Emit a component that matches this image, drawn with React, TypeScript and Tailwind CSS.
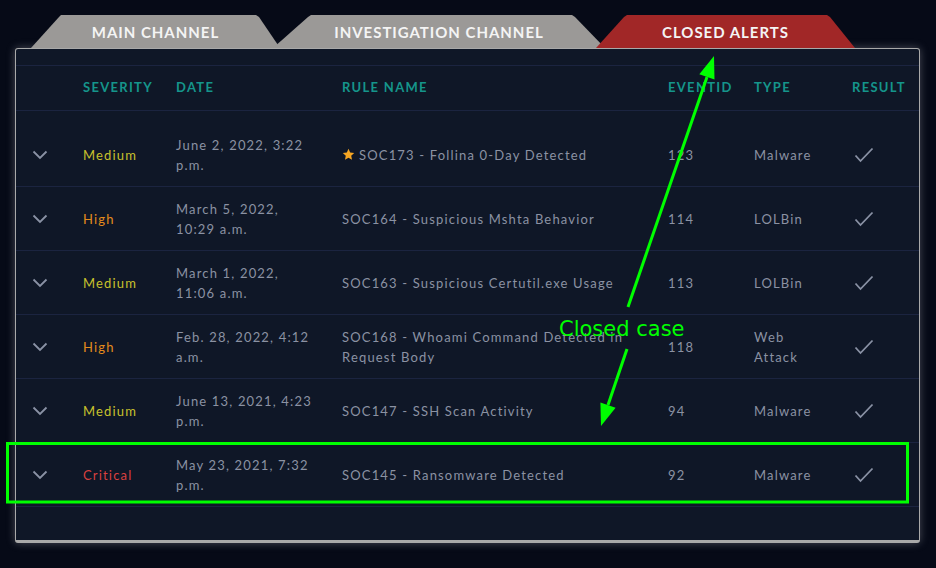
import React from 'react'

type Severity = 'Medium' | 'High' | 'Critical'

interface Alert {
  severity: Severity
  date: string[]
  rule: string[]
  starred?: boolean
  eventId: string
  type: string[]
}

const SEVERITY_COLOR: Record<Severity, string> = {
  Medium: 'text-[#c9c12c]',
  High: 'text-[#e38b1c]',
  Critical: 'text-[#d9403f]',
}

const ALERTS: Alert[] = [
  { severity: 'Medium', date: ['June 2, 2022, 3:22', 'p.m.'], rule: ['SOC173 - Follina 0-Day Detected'], starred: true, eventId: '123', type: ['Malware'] },
  { severity: 'High', date: ['March 5, 2022,', '10:29 a.m.'], rule: ['SOC164 - Suspicious Mshta Behavior'], eventId: '114', type: ['LOLBin'] },
  { severity: 'Medium', date: ['March 1, 2022,', '11:06 a.m.'], rule: ['SOC163 - Suspicious Certutil.exe Usage'], eventId: '113', type: ['LOLBin'] },
  { severity: 'High', date: ['Feb. 28, 2022, 4:12', 'a.m.'], rule: ['SOC168 - Whoami Command Detected in', 'Request Body'], eventId: '118', type: ['Web', 'Attack'] },
  { severity: 'Medium', date: ['June 13, 2021, 4:23', 'p.m.'], rule: ['SOC147 - SSH Scan Activity'], eventId: '94', type: ['Malware'] },
  { severity: 'Critical', date: ['May 23, 2021, 7:32', 'p.m.'], rule: ['SOC145 - Ransomware Detected'], eventId: '92', type: ['Malware'] },
]

const GRID = 'grid grid-cols-[67px_93px_166px_326px_86px_98px_1fr] items-center'

function Lines({ lines }: { lines: string[] }) {
  return (
    <div>
      {lines.map((l) => (
        <div key={l}>{l}</div>
      ))}
    </div>
  )
}

function Chevron() {
  return (
    <svg width="16" height="10" viewBox="0 0 16 10" className="ml-[16px]">
      <polyline points="1.5,1.5 8,8 14.5,1.5" fill="none" stroke="#8a92a5" strokeWidth="1.8" />
    </svg>
  )
}

function Check() {
  return (
    <svg width="20" height="16" viewBox="0 0 20 16" className="ml-[2px]">
      <polyline points="1.5,8.5 6.5,14 18.5,1.5" fill="none" stroke="#8a92a5" strokeWidth="1.8" />
    </svg>
  )
}

function Star() {
  return (
    <svg width="13" height="13" viewBox="0 0 24 24" className="mr-[4px] shrink-0">
      <polygon
        points="12,1.5 15.1,8.3 22.5,9.1 17,14.1 18.5,21.5 12,17.8 5.5,21.5 7,14.1 1.5,9.1 8.9,8.3"
        fill="#f6a623"
      />
    </svg>
  )
}

function Tab({ label, className }: { label: string; className: string }) {
  return (
    <div
      className={`flex h-[33px] items-center justify-center pt-[1px] text-[15px] font-bold tracking-[0.065em] text-[#f4f4f4] ${className}`}
    >
      {label}
    </div>
  )
}

export default function App() {
  return (
    <div className="relative h-[568px] w-[936px] overflow-hidden bg-[#060a17] font-['Lato','Noto_Sans',sans-serif]">
      <div className="px-[15px] pt-[15px]">
        {/* Tabs */}
        <div className="relative z-10 ml-[16px] flex">
          <Tab
            label="MAIN CHANNEL"
            className="w-[249px] bg-[#9b9997] [clip-path:polygon(0_100%,28px_2px,30px_0,225px_0,228px_2px,100%_100%)]"
          />
          <Tab
            label="INVESTIGATION CHANNEL"
            className="-ml-[7px] w-[332px] bg-[#9b9997] [clip-path:polygon(0_100%,35px_2px,38px_0,299px_0,302px_2px,100%_100%)]"
          />
          <Tab
            label="CLOSED ALERTS"
            className="-ml-[9px] w-[259px] bg-[#a12727] [clip-path:polygon(0_100%,28px_2px,31px_0,231px_0,234px_2px,100%_100%)]"
          />
        </div>

        {/* Panel */}
        <div className="h-[495px] w-[905px] rounded-[3px] border border-b-[3px] border-[#a9a9a9] bg-[#0f1727] shadow-[0_0_8px_rgba(200,200,210,0.35)]">
          <div className="h-[17px] border-b border-[#1b2440]" />
          <div
            className={`${GRID} h-[45px] border-b border-[#1b2440] text-[13px] font-bold tracking-[0.1em] text-[#15958b]`}
          >
            <div />
            <div>SEVERITY</div>
            <div>DATE</div>
            <div>RULE NAME</div>
            <div>EVENTID</div>
            <div>TYPE</div>
            <div>RESULT</div>
          </div>
          <div className="h-[12px]" />
          {ALERTS.map((a) => (
            <div
              key={a.rule[0]}
              className={`${GRID} h-[64px] border-b border-[#1b2440] text-[13px] leading-[20px] tracking-[0.09em] text-[#8b92a3]`}
            >
              <Chevron />
              <div className={SEVERITY_COLOR[a.severity]}>{a.severity}</div>
              <Lines lines={a.date} />
              <div className="flex items-center">
                {a.starred && <Star />}
                <Lines lines={a.rule} />
              </div>
              <div>{a.eventId}</div>
              <Lines lines={a.type} />
              <Check />
            </div>
          ))}
        </div>
      </div>

      {/* Annotation overlay */}
      <svg className="pointer-events-none absolute inset-0" width="936" height="568" viewBox="0 0 936 568">
        <rect x="7.5" y="443.5" width="900" height="58.5" fill="none" stroke="#00ff00" strokeWidth="3" />
        <line x1="628" y1="307" x2="707" y2="77" stroke="#00ff00" strokeWidth="3" />
        <polygon points="714,56 714.5,79.4 699.3,74.2" fill="#00ff00" />
        <line x1="627" y1="349" x2="608" y2="405" stroke="#00ff00" strokeWidth="3" />
        <polygon points="601,426 615.6,407.8 600.4,402.6" fill="#00ff00" />
      </svg>
      <div className="pointer-events-none absolute left-[559px] top-[316px] font-['DejaVu_Sans',sans-serif] text-[21px] leading-[26px] text-[#00ff00]">
        Closed case
      </div>
    </div>
  )
}
